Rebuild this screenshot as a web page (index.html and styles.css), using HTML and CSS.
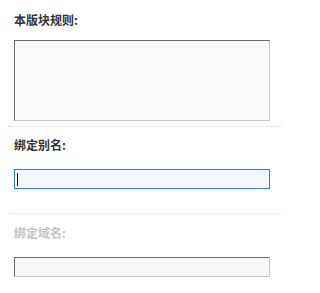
FILE: index.html
```html
<!DOCTYPE html>
<html>
<head>
<meta charset="utf-8">
<link rel="stylesheet" href="styles.css">
</head>
<body>
<div class="wrap">
  <div class="sec sec-rules">
    <div class="label">本版块规则:</div>
    <div class="area"></div>
  </div>
  <div class="sec sec-alias">
    <div class="label">绑定别名:</div>
    <div class="field focus"><span class="caret"></span></div>
  </div>
  <div class="sec sec-domain">
    <div class="label muted">绑定域名:</div>
    <div class="field"></div>
  </div>
</div>
</body>
</html>
```
FILE: styles.css
```css
html, body {
  margin: 0;
  padding: 0;
  background: #ffffff;
}
.wrap {
  margin-left: 8px;
  width: 274px;
  font-family: "SimSun", "Noto Sans CJK SC", sans-serif;
}
.sec {
  padding: 0 6px;
}
.label {
  font-size: 12px;
  line-height: 18px;
  font-weight: bold;
  color: #333333;
}
.label.muted {
  color: #c4c4c4;
}
.sec-rules {
  padding-top: 11px;
  padding-bottom: 5px;
  border-bottom: 1px dotted #c9dde6;
}
.sec-rules .area {
  margin-top: 11px;
  width: 254px;
  height: 79px;
  background: #f9f9f9;
  border-style: solid;
  border-width: 1px;
  border-color: #6a6a6a #c8c8c8 #c8c8c8 #6a6a6a;
}
.sec-alias {
  padding-top: 9px;
  padding-bottom: 24px;
  border-bottom: 1px dotted #e0e0e0;
}
.sec-alias .field {
  margin-top: 15px;
}
.sec-domain {
  padding-top: 10px;
}
.sec-domain .field {
  margin-top: 15px;
}
.field {
  position: relative;
  width: 254px;
  height: 18px;
  background: #f7f7f7;
  border-style: solid;
  border-width: 1px;
  border-color: #6a6a6a #c8c8c8 #c8c8c8 #6a6a6a;
}
.field.focus {
  background: #f3f7fb;
  border-color: #2f8a9c;
  box-shadow: 0 0 2px #bfeaf2;
}
.caret {
  position: absolute;
  left: 2px;
  top: 3px;
  width: 1px;
  height: 13px;
  background: #111111;
}
```
